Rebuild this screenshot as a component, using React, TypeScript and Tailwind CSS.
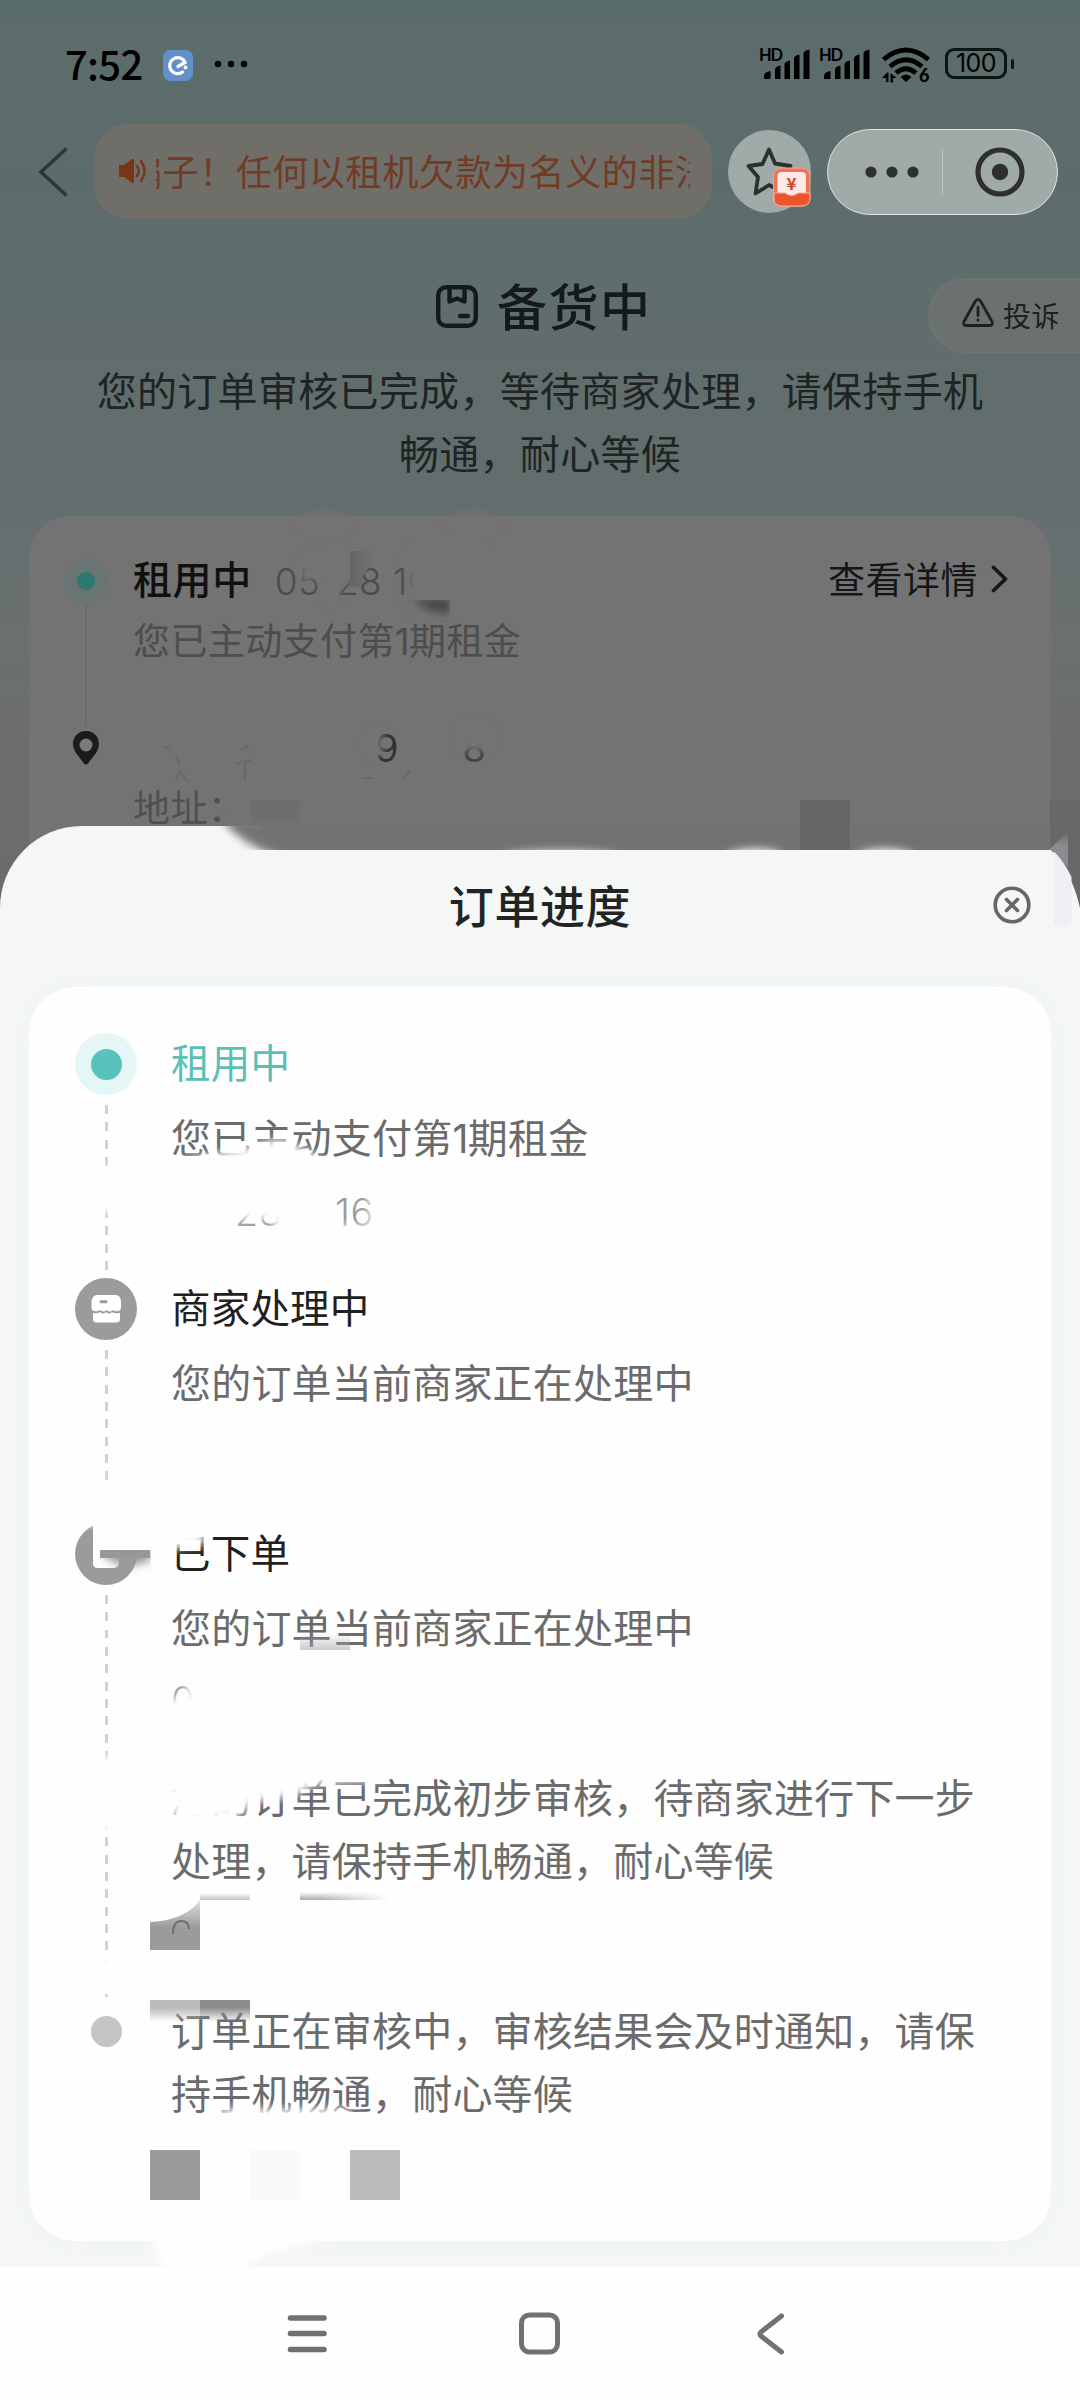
import type { ReactNode } from "react";

type StepProps = {
  marker?: ReactNode;
  title?: string;
  titleClass?: string;
  height: string;
  railClass?: string;
  bodyClass?: string;
  children: ReactNode;
};

// the digit one is set tighter than the ideographs around it
function One() {
  return <span className="font-['Inter',sans-serif] text-[0.98em] tracking-[-0.5px]">1</span>;
}

function Step({ marker, title, titleClass = "text-[#1f2121]", height, railClass, bodyClass = "-mt-[2px]", children }: StepProps) {
  return (
    <li className={`flex gap-[34px] ${height}`}>
      <div className="flex w-[62px] shrink-0 flex-col items-center">
        {marker}
        {railClass ? (
          <div
            className={`w-[3px] flex-1 bg-[repeating-linear-gradient(to_bottom,#d2d2d2_0px,#d2d2d2_8.8px,transparent_8.8px,transparent_17.35px)] ${railClass}`}
          />
        ) : null}
      </div>
      <div className={`text-[40px] tracking-[0.2px] whitespace-nowrap ${bodyClass}`}>
        {title ? <h3 className={`-mt-px mb-[13px] text-[39.5px] leading-[62px] ${titleClass}`}>{title}</h3> : null}
        <div className="leading-[63px] text-[#6b6b6b]">{children}</div>
      </div>
    </li>
  );
}

function SignalIcon() {
  return (
    <svg viewBox="0 -6 52 42" className="-mt-[6px] h-[42px] w-[52px] overflow-visible" fill="#000">
      <text x="0" y="13.500" fontSize="16.500" fontWeight="700" fontFamily="Lato, sans-serif" textLength="24">
        HD
      </text>
      <path d="M5 32v-3q0-4 6.500-5v8zM16 32V22q1-3 5.500-3.500V32zM25.500 32V17q1-3 5.500-3.500V32zM35 32V11q1-3 5.500-3.500V32zM44.500 32V6q1-3 6-3.500V32z" />
    </svg>
  );
}

function StatusBar() {
  return (
    <div className="flex h-[124px] items-start pt-[44px] pr-[66px] pl-[65px] text-black">
      <span className="-mt-px w-[98px] text-[40px] leading-[40px] font-medium tracking-[-0.7px]">7:52</span>
      <svg viewBox="0 0 30 31" className="mt-[6px] h-[31px] w-[30px]">
        <rect width="30" height="31" rx="7.500" fill="#6290c8" />
        <path d="M15 16.500l7-4A8 8 0 1 0 19.500 22" fill="none" stroke="#fff" strokeWidth="3.200" strokeLinecap="round" />
        <circle cx="22.500" cy="17.500" r="1.900" fill="#fff" />
      </svg>
      <svg viewBox="0 0 34 8" className="mt-[16px] ml-[21px] h-[8px] w-[34px]">
        <circle cx="4" cy="4" r="3.200" />
        <circle cx="17" cy="4" r="3.200" />
        <circle cx="30" cy="4" r="3.200" />
      </svg>
      <div className="ml-auto flex items-start">
        <div className="mt-[3px] flex gap-[8px]">
          <SignalIcon />
          <SignalIcon />
        </div>
        <svg viewBox="0 0 50 42" className="mt-[3px] ml-[11px] h-[42px] w-[50px] overflow-visible">
          <g fill="none" stroke="#000" strokeWidth="4.800">
            <path d="M1.500 12.500Q24-6.500 46.500 12.500" />
            <path d="M8 19.500Q24 6 40 19.500" />
            <path d="M14 26Q24 17.500 34 26" />
          </g>
          <path d="M18.500 30q5.500-5 11 0l-5.500 5z" />
          <path d="M0 31l5-5.500h1.500V35H4v-4zM8.500 35.500v-9.500l6 5H11v4.500z" />
          <text x="37" y="35" fontSize="18" fontWeight="900" fontFamily="Lato, sans-serif">
            6
          </text>
        </svg>
        <div className="mt-[4px] ml-[13px] flex h-[31px] w-[62px] items-center justify-center rounded-[9px] border-[3px] border-[#0a1714] font-['Inter',sans-serif] text-[25px] leading-none tracking-[-0.5px]">
          100
        </div>
        <div className="mt-[15px] ml-[4px] h-[10px] w-[3px] rounded-sm bg-[#0a1714]" />
      </div>
    </div>
  );
}

function NavRow() {
  return (
    <div className="flex h-[95px] items-center pl-[38px]">
      <svg viewBox="0 0 30 50" className="h-[50px] w-[30px]" fill="none" stroke="#2d3638" strokeWidth="3.600">
        <path d="M28.500 1.500L3 25l25.500 23.500" />
      </svg>
      <div className="ml-[26px] flex h-[95px] w-[618px] items-center rounded-[34px] bg-[#706e68] pl-[25px] text-[#713b24]">
        <svg viewBox="0 0 29 26" className="-mt-[2px] h-[26px] w-[29px]">
          <path d="M0 7h5l8-6q2-1 2 1v22q0 2-2 1l-8-6H0z" fill="#7a3518" />
          <path d="M18 8q3.500 5 0 10M22 3q7 10 0 20" fill="none" stroke="#7a3518" strokeWidth="2.400" strokeLinecap="round" />
        </svg>
        <div className="ml-[8px] w-[534px] overflow-hidden">
          <p className="-mt-[4px] -ml-[30px] w-max text-[36px] leading-[54px] tracking-[0.6px] whitespace-nowrap">
            骗子！任何以租机欠款为名义的非法
          </p>
        </div>
      </div>
      <div className="ml-[16px] flex size-[83px] items-center justify-center rounded-full bg-[#a0aaa8]">
        <svg viewBox="0 0 83 83" className="size-[83px] shrink-0">
          <path
            d="M41 19.500l6 14 15.500 2.500-11.500 10.500 3.500 15.500L41 55 27.500 63.500l2.500-16.500L20.500 36l14-2z"
            fill="none"
            stroke="#2d3030"
            strokeWidth="3.800"
            strokeLinejoin="round"
          />
          <rect x="45.500" y="38" width="36.500" height="38" rx="8" fill="#e8775a" stroke="#f3a58d" strokeWidth="1" />
          <rect x="49.500" y="42" width="28.500" height="26" rx="4" fill="#fdeae6" />
          <path d="M46 63h11q6.500 5 13 0h12v5q0 8-8 8H54q-8 0-8-8z" fill="#ec5429" stroke="#f7b09b" strokeWidth="1" />
          <text x="63.500" y="60" fontSize="17" fontWeight="700" textAnchor="middle" fill="#c74a2c">
            ¥
          </text>
        </svg>
      </div>
      <div className="ml-[16px] flex h-[86px] w-[231px] items-center rounded-full border-[1.500px] border-[#dde3e1] bg-[#a0aaa8]">
        <svg viewBox="0 0 229 84" className="h-[84px] w-[229px]">
          <g fill="#2e3030">
            <circle cx="43" cy="42" r="5.600" />
            <circle cx="64" cy="42" r="5.600" />
            <circle cx="85" cy="42" r="5.600" />
            <circle cx="172" cy="42" r="8.200" />
          </g>
          <path d="M114.500 19v46" stroke="#bcc4c2" strokeWidth="1.200" />
          <circle cx="172" cy="42" r="22" fill="none" stroke="#2e3030" strokeWidth="5.200" />
        </svg>
      </div>
    </div>
  );
}

function OrderHeader() {
  return (
    <div className="flex h-[297px] flex-col">
      <div className="flex h-[134px] pt-[59px]">
        <div className="flex h-[56px] flex-1 items-center pl-[436px] text-[#141919]">
          <svg viewBox="0 0 42 43" className="h-[43px] w-[42px]" fill="none" stroke="#141a1a" strokeWidth="4.400">
            <rect x="2.200" y="2.200" width="37.600" height="38.600" rx="8" />
            <path d="M13.500 3v13.500l7.500-3 7.500 3V3" strokeLinejoin="round" />
            <path d="M24 31h8" strokeLinecap="round" />
          </svg>
          <h1 className="-mt-[5px] ml-[19px] text-[50px] leading-[56px] font-medium tracking-[1.500px]">备货中</h1>
        </div>
        <div className="flex h-[75px] w-[152px] items-center rounded-l-full border-2 border-r-0 border-[#6b7674] bg-[#6a716e] pl-[31px] text-[#1c2121]">
          <svg viewBox="0 0 34 30" className="-mt-[5px] h-[30px] w-[34px]" fill="none" stroke="#1c2121" strokeWidth="2.800" strokeLinejoin="round" strokeLinecap="round">
            <path d="M14.500 3q2.500-3 5 0l11.500 20.500q1.500 4-2.500 4h-23q-4 0-2.500-4z" />
            <path d="M17 9.500v8M17 22v.3" />
          </svg>
          <span className="-mt-[2px] ml-[8px] text-[28px] leading-[40px] tracking-[0.6px]">投诉</span>
        </div>
      </div>
      <p className="pt-[5px] text-center text-[40px] leading-[62.500px] tracking-[0.3px] text-[#1e2424]">
        您的订单审核已完成，等待商家处理，请保持手机
        <br />
        畅通，耐心等候
      </p>
    </div>
  );
}

function OrderCard() {
  return (
    <div className="mx-[29px] flex h-[400px] rounded-t-[40px] bg-[#737373] pt-[43px] pr-[42px]">
      <div className="flex w-[104px] flex-col items-center pl-[10px]">
        <div className="flex size-[44px] items-center justify-center rounded-full bg-[#697573]">
          <div className="size-[18px] rounded-full bg-[#2a7a6f]" />
        </div>
        <div className="h-[123px] w-[2px] bg-[#6a6a6a]" />
        <svg viewBox="0 0 28 36" className="mt-[4px] h-[36px] w-[28px]">
          <path d="M14 1C6 1 1 7 1 14c0 8 7 13 10.500 19q2.500 3 5 0C20 27 27 22 27 14 27 7 22 1 14 1z" fill="#1b1b1b" />
          <circle cx="14" cy="15" r="6.500" fill="#7a7a7a" />
        </svg>
      </div>
      <div className="flex-1 whitespace-nowrap">
        <div className="flex h-[40px] items-center">
          <h2 className="-mt-[3px] text-[39px] font-medium tracking-[0.6px] text-[#101010]">租用中</h2>
          <span className="mt-[5px] ml-[23px] font-['Inter',sans-serif] text-[37px] font-light tracking-[0.3px] text-[#4c4c4c]">05-28 16</span>
          <span className="-mt-px ml-auto text-[37px] tracking-[0.5px] text-[#161616]">查看详情</span>
          <svg viewBox="0 0 18 28" className="ml-[13px] h-[28px] w-[18px]" fill="none" stroke="#161616" strokeWidth="3.600" strokeLinecap="round" strokeLinejoin="round">
            <path d="M2.500 2.500L14.500 14 2.500 25.500" />
          </svg>
        </div>
        <p className="mt-[13px] text-[37px] leading-[54px] tracking-[0.4px] text-[#4d4d4d]">
          您已主动支付第<One />期租金
        </p>
        <div className="mt-[52px] flex h-[54px] items-center font-['Inter',sans-serif] text-[38px] text-[#333]">
          <span className="ml-[242px]">9</span>
          <span className="ml-[64px] text-[#444]">8</span>
        </div>
        <p className="mt-[4px] text-[37px] leading-[54px] tracking-[0.4px] text-[#505050]">地址：</p>
      </div>
    </div>
  );
}

function ShopMarker() {
  return (
    <svg viewBox="0 0 62 62" className="size-[62px] shrink-0">
      <circle cx="31" cy="31" r="31" fill="#9b9b9b" />
      <path d="M22 17h19q4 0 5 6v6q0 4-3 4-3 1-5-1-3.500 3-6.500 0-3 3-6 0-3 2-6 1-3 0-3-4v-6q1-6 5.500-6z" fill="#fff" />
      <path d="M18 35q4 1 7-1 3 3 6 0 3 3 6 0 3 2 8 1v6q0 3.500-3.500 3.500h-20Q18 44.500 18 41z" fill="#fff" />
      <path d="M26 23.700h5" stroke="#9b9b9b" strokeWidth="3" strokeLinecap="round" />
    </svg>
  );
}

function PlacedMarker() {
  return (
    <svg viewBox="0 0 62 62" className="size-[62px] shrink-0">
      <circle cx="31" cy="31" r="31" fill="#9b9b9b" />
      <rect x="18" y="14" width="26" height="31" rx="5" fill="#fff" />
    </svg>
  );
}

function ProgressSheet() {
  return (
    <section className="absolute inset-x-0 top-[826px] flex h-[1574px] flex-col rounded-t-[82px] bg-[#f5f7f7]">
      <div className="flex h-[161px] items-center pr-[49px] pl-[87px]">
        <h2 className="-mt-[4px] flex-1 text-center text-[45px] leading-[60px] font-medium tracking-[0.6px] text-[#222424]">订单进度</h2>
        <svg viewBox="0 0 38 38" className="-mt-[3px] size-[38px]" fill="none" stroke="#666868" strokeWidth="3.600" strokeLinecap="round">
          <circle cx="19" cy="19" r="16.800" />
          <path d="M13.500 13.500l11 11M24.500 13.500l-11 11" />
        </svg>
      </div>
      <ul className="mx-[29px] h-[1254px] rounded-[46px] bg-[#fefefe] pt-[46px] pl-[46px] shadow-[0_0_24px_#eff2f2]">
        <Step
          height="h-[245px]"
          title="租用中"
          titleClass="text-[#5bbfb6]"
          railClass="mt-[10px]"
          marker={
            <div className="flex size-[62px] shrink-0 items-center justify-center rounded-full bg-[#e5f6f7]">
              <div className="size-[31px] rounded-full bg-[#58c3ba]" />
            </div>
          }
        >
          <p>
            您已主动支付第<One />期租金
          </p>
          <p className="mt-[11px] flex font-['Inter',sans-serif] text-[38px] font-light tracking-[0.600px] text-[#9a9a9a]">
            <span className="w-[164px]">05-28</span>
            <span>16</span>
          </p>
        </Step>
        <Step height="h-[245px]" title="商家处理中" railClass="mt-[10px]" marker={<ShopMarker />}>
          您的订单当前商家正在处理中
        </Step>
        <Step height="h-[241px]" title="已下单" railClass="mt-[10px]" marker={<PlacedMarker />}>
          <p>您的订单当前商家正在处理中</p>
          <p className="mt-[11px] font-['Inter',sans-serif] text-[38px] font-light text-[#a5a5a5]">0</p>
        </Step>
        <Step height="h-[233px]" railClass="mt-[4px]" bodyClass="mt-px">
          您的订单已完成初步审核，待商家进行下一步
          <br />
          处理，请保持手机畅通，耐心等候
        </Step>
        <Step height="h-[150px]" bodyClass="mt-px" marker={<div className="mt-[19px] size-[31px] rounded-full bg-[#c4c4c4]" />}>
          订单正在审核中，审核结果会及时通知，请保
          <br />
          持手机畅通，耐心等候
        </Step>
      </ul>
      <div className="mt-[26px] flex flex-1 items-start bg-[#fefefe] pt-[45px] pl-[286px]">
        <svg viewBox="0 0 42 44" className="h-[44px] w-[42px]" stroke="#717171" strokeWidth="5.600" strokeLinecap="round">
          <path d="M4.500 6h33.500M4.500 21.500h33.500M4.500 37.500h33.500" />
        </svg>
        <svg viewBox="0 0 44 44" className="ml-[190px] h-[44px] w-[44px]" fill="none" stroke="#717171" strokeWidth="5">
          <rect x="3.500" y="3" width="36" height="37" rx="8" />
        </svg>
        <svg viewBox="0 0 30 44" className="ml-[194px] h-[44px] w-[30px]" fill="none" stroke="#717171" strokeWidth="5" strokeLinecap="round" strokeLinejoin="round">
          <path d="M25.500 4L5 20q-2 2 0 4l20.500 16" />
        </svg>
      </div>
    </section>
  );
}

// brush strokes and mosaic cells that hide the personal data
function Redactions() {
  return (
    <svg viewBox="0 0 1080 2400" className="pointer-events-none absolute inset-0 h-[2400px] w-[1080px]">
      <defs>
        <filter id="soft" x="-30%" y="-50%" width="160%" height="200%">
          <feGaussianBlur stdDeviation="4" />
        </filter>
        <clipPath id="aboveSheet">
          <rect x="200" y="700" width="850" height="150" />
        </clipPath>
        <clipPath id="inSheet">
          <rect x="75" y="1000" width="800" height="1267" />
        </clipPath>
        <linearGradient id="cellUp" x1="0" y1="0" x2="0" y2="1">
          <stop offset="0" stopColor="#9b9b9b" stopOpacity="0.300" />
          <stop offset="0.550" stopColor="#9b9b9b" />
        </linearGradient>
        <linearGradient id="shade" x1="0" y1="0" x2="1" y2="0">
          <stop offset="0" stopColor="#646464" />
          <stop offset="1" stopColor="#737373" />
        </linearGradient>
        <linearGradient id="lightDown" x1="0" y1="0" x2="0" y2="1">
          <stop offset="0" stopColor="#bbb" />
          <stop offset="0.350" stopColor="#bbb" />
          <stop offset="1" stopColor="#bbb" stopOpacity="0" />
        </linearGradient>
        <linearGradient id="darkDown" x1="0" y1="0" x2="0" y2="1">
          <stop offset="0" stopColor="#8d8d8d" />
          <stop offset="0.350" stopColor="#8d8d8d" />
          <stop offset="1" stopColor="#8d8d8d" stopOpacity="0" />
        </linearGradient>
        <linearGradient id="greyUp" x1="0" y1="0" x2="0" y2="1">
          <stop offset="0" stopColor="#aaa" stopOpacity="0" />
          <stop offset="1" stopColor="#aaa" />
        </linearGradient>
        <linearGradient id="greyFade" x1="0" y1="0" x2="1" y2="0">
          <stop offset="0" stopColor="#fefefe" stopOpacity="0" />
          <stop offset="1" stopColor="#fefefe" />
        </linearGradient>
        <linearGradient id="thumb" x1="0" y1="0" x2="0" y2="1">
          <stop offset="0" stopColor="#8c8c90" stopOpacity="0" />
          <stop offset="0.400" stopColor="#8c8c90" />
        </linearGradient>
      </defs>

      <g filter="url(#soft)" fill="#737373">
        <ellipse cx="325" cy="522" rx="26" ry="9" />
        <ellipse cx="474" cy="522" rx="26" ry="9" />
        <path d="M302 560h36v8l-26 10-8 6h-4z" />
        <path d="M320 555h20v44h-20zM336 555h20v28h-20z" />
        <path d="M409 550h80v62h-80z" />
      </g>
      <path d="M350 551h24v14q-10 4-12 16 0 6-4 6h-8z" fill="url(#shade)" />
      <path d="M412 599h38v14q-20 1-38-14z" fill="#444" filter="url(#soft)" />
      <rect x="409" y="586" width="86" height="14" fill="#737373" />
      <rect x="450" y="600" width="50" height="22" fill="#737373" />
      <g stroke="#5d5d5d" strokeWidth="2" fill="none" opacity="0.500">
        <path d="M164 748l6-2M175 756q4 2 4 8M176 781l4-10 8 11M242 749l7-3M246 762l5-2M245 760v20M236 764l6-2M362 778h11M404 778l6-8" />
      </g>
      <g filter="url(#soft)" fill="#737373">
        <rect x="368" y="732" width="15" height="24" />
        <ellipse cx="475" cy="738" rx="18" ry="13" />
      </g>
      <rect x="250" y="800" width="50" height="26" fill="#6e6e6e" />
      <rect x="800" y="800" width="50" height="50" fill="#666" />

      <g clipPath="url(#aboveSheet)">
        <path d="M222 820h840v40H300q-50-6-78-40z" fill="#737373" filter="url(#soft)" />
        <path d="M260 824h790v26H300q-30-6-40-26z" fill="#727272" />
        <rect x="800" y="800" width="50" height="50" fill="#666" />
        <g fill="#f5f7f7" filter="url(#soft)">
          <ellipse cx="560" cy="858" rx="60" ry="7" />
          <ellipse cx="755" cy="857" rx="28" ry="8" />
          <ellipse cx="885" cy="857" rx="28" ry="8" />
        </g>
      </g>
      <path d="M1050 800h30v108q-8-36-30-59z" fill="#686868" />
      <path d="M1050 849l18-18v36z" fill="url(#thumb)" />
      <path d="M1054 852q10 10 17 25v42q0 8-8 8t-9-8z" fill="#eff0f5" stroke="#eceef1" strokeWidth="1" />

      <g clipPath="url(#inSheet)">
        <g filter="url(#soft)" fill="#fefefe">
          <path d="M85 1168h45v44H85z" />
          <path d="M170 1162l84-16q20-10 36-4l24 12 18 12v20H170z" />
          <path d="M165 1190h68v44h-68zM233 1190h94v29h-94zM274 1190h54v46h-54zM369 1193h24v38h-24zM335 1226h50v14h-50z" />
          <path d="M85 1484h60v40H85z" />
          <path d="M165 1515h30l10 18v12l-36 5z" />
          <path d="M165 1698h50v30h-50zM187 1678h22v40h-22z" />
          <path d="M85 1757h45v74H85z" />
          <path d="M165 1770h130l90-4v14l-70 4-20 12-42 6-14 14-64 10z" />
          <path d="M85 1957h45v32H85z" />
          <path d="M220 2109h130v12H220z" />
        </g>
        <path d="M152 2236h190l-70 16-30 18h-80z" fill="#fefefe" filter="url(#soft)" />
        <path d="M93 1518h64v32H93z" fill="#fefefe" />
        <path d="M93 1520v32" stroke="#fefefe" strokeWidth="5" filter="url(#soft)" />
        <path d="M100 1550h50v12q-16 2-24 6-14-6-26-14z" fill="#9b9b9b" filter="url(#soft)" />
        <path d="M100 1550h50v8h-50z" fill="#989898" />
        <path d="M94 1540h64v10H94z" fill="#fefefe" />
        <path d="M151 1536h6v30h-6z" fill="#fefefe" />
        <path d="M93 1548h7v20h-2q-5 0-5-5z" fill="#fefefe" />
        <rect x="300" y="1633" width="50" height="17" fill="url(#greyUp)" opacity="0.600" />
        <rect x="200" y="1893" width="50" height="7" fill="url(#greyUp)" opacity="0.700" />
        <rect x="300" y="1892" width="90" height="8" fill="url(#greyUp)" />
        <rect x="320" y="1890" width="70" height="10" fill="url(#greyFade)" />
        <path d="M150 1922q36-2 50-22v50h-50z" fill="url(#cellUp)" />
        <path d="M173 1934q0-13 8-13t8 8" fill="none" stroke="#6f6f6f" strokeWidth="2" />
        <rect x="150" y="2000" width="50" height="22" fill="url(#lightDown)" />
        <rect x="200" y="2000" width="50" height="22" fill="url(#darkDown)" />
        <rect x="150" y="2150" width="50" height="50" fill="#9b9b9b" />
        <rect x="250" y="2150" width="50" height="50" fill="#f9f9f9" />
        <rect x="350" y="2150" width="50" height="50" fill="#bcbcbc" />
      </g>
    </svg>
  );
}

export default function App() {
  return (
    <main className="relative h-[2400px] w-[1080px] overflow-hidden bg-[linear-gradient(to_bottom,#5b6d6b_0px,#5c6c6a_190px,#606d6d_240px,#636d6d_480px,#656e70_530px,#6a716f_640px,#6d6e6c_740px,#6b6b6b_900px)] font-['Noto_Sans_CJK_SC',sans-serif]">
      <StatusBar />
      <NavRow />
      <OrderHeader />
      <OrderCard />
      <ProgressSheet />
      <Redactions />
    </main>
  );
}
